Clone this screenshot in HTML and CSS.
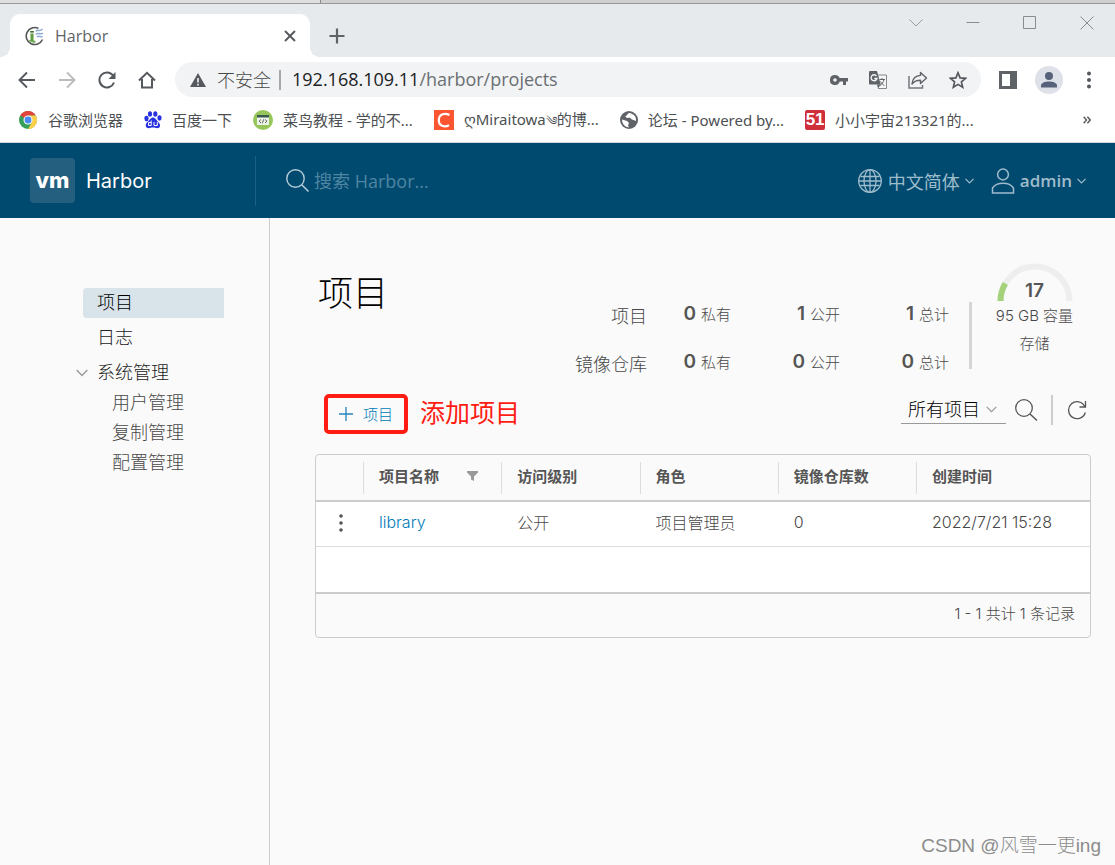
FILE: index.html
```html
<!DOCTYPE html>
<html lang="zh-CN">
<head>
<meta charset="utf-8">
<meta name="viewport" content="width=device-width, initial-scale=1">
<title>Harbor</title>
<link rel="stylesheet" href="styles.css">
</head>
<body>
<div class="window">
  <div class="desktop-edge"></div>
  <div class="tabstrip">
    <div class="tab">
      <svg class="tab-icon" width="20" height="20" viewBox="0 0 20 20"><path d="M13.500 2.400A8.500 8.500 0 1 0 17.500 13.500" fill="none" stroke="#555" stroke-width="1.600"/><path d="M5.500 7.500h3V15H5.500z" fill="#5d9c3f"/><path d="M5.200 5h3.600v1.600H5.200z" fill="#38682a"/><path d="M3.500 14q4-.5 7 1v1.500q-4 .8-7-2.500z" fill="#6ba84b"/><path d="M11 5.500c2-3 3 1 6.500-2.500M11 8.500c2-3 4 1 7-1.500M12 11c2-2 3 .5 5.500-.5" fill="none" stroke="#8dabd2" stroke-width="1.500"/></svg>
      <span class="tab-title">Harbor</span>
      <button class="icon-button tab-close" aria-label="关闭标签页"><svg width="12" height="12" viewBox="0 0 12 12"><path d="M1 1l10 10M11 1L1 11" stroke="#55585c" stroke-width="1.900"/></svg></button>
    </div>
    <button class="icon-button new-tab" aria-label="新标签页"><svg width="16" height="16" viewBox="0 0 16 16"><path d="M8 0.500v15M.5 8h15" stroke="#5f6368" stroke-width="2.200"/></svg></button>
    <div class="window-controls">
      <button class="icon-button" aria-label="搜索标签页"><svg width="14" height="14" viewBox="0 0 14 14"><path d="M.5 3.500L7 10l6.500-6.500" fill="none" stroke="#999da1"/></svg></button>
      <button class="icon-button" aria-label="最小化"><svg width="14" height="14" viewBox="0 0 14 14"><path d="M.5 6.500h13" stroke="#888b8f"/></svg></button>
      <button class="icon-button" aria-label="最大化"><svg width="14" height="14" viewBox="0 0 14 14"><path d="M.5.5h12v12H.5z" fill="none" stroke="#888b8f"/></svg></button>
      <button class="icon-button" aria-label="关闭"><svg width="14" height="14" viewBox="0 0 14 14"><path d="M.5.5l13 13M13.500.5l-13 13" stroke="#888b8f"/></svg></button>
    </div>
  </div>

  <div class="toolbar">
    <div class="nav-buttons">
      <button class="icon-button" aria-label="后退"><svg width="18" height="18" viewBox="0 0 18 18"><path d="M17 9H2M9 1.500L1.500 9 9 16.500" fill="none" stroke="#55595e" stroke-width="1.900"/></svg></button>
      <button class="icon-button" aria-label="前进"><svg width="18" height="18" viewBox="0 0 18 18"><path d="M1 9h15M9 1.500L16.500 9 9 16.500" fill="none" stroke="#babcbe" stroke-width="1.900"/></svg></button>
      <button class="icon-button" aria-label="刷新"><svg width="18" height="18" viewBox="0 0 18 18"><path d="M15 4.500A7.500 7.500 0 1 0 16 11.500" fill="none" stroke="#55595e" stroke-width="2"/><path d="M17.500 1v7h-7z" fill="#55595e"/></svg></button>
      <button class="icon-button" aria-label="主页"><svg width="18" height="18" viewBox="0 0 18 18"><path d="M1 9.500L9 1.800l8 7.700M4 8v8.500h10V8" fill="none" stroke="#55595e" stroke-width="2"/></svg></button>
    </div>
    <div class="omnibox">
      <svg width="16" height="14" viewBox="0 0 16 14"><path d="M8 0l8 14H0z" fill="#55595e"/><path d="M8 5v4.500M8 10.800v1.700" stroke="#f1f3f4" stroke-width="1.600"/></svg>
      <span class="insecure">不安全</span>
      <div class="address"><span class="host">192.168.109.11</span><input class="path" type="text" value="/harbor/projects" aria-label="地址"></div>
      <div class="omnibox-actions">
        <button class="icon-button" aria-label="密码"><svg width="18" height="18" viewBox="0 0 18 18"><path fill-rule="evenodd" d="M5 4a5 5 0 1 0 4.700 6.500H13V14h3v-3.500h2v-3.500H9.700A5 5 0 0 0 5 4zm0 3.200a1.800 1.800 0 1 1 0 3.600 1.800 1.800 0 0 1 0-3.600z" fill="#5f6368"/></svg></button>
        <button class="icon-button" aria-label="翻译"><svg width="18" height="18" viewBox="0 0 18 18"><path d="M8 4h9.500v13.500H9" fill="#f5f6f6" stroke="#85898d"/><path d="M1 0h7l3.700 13.500H1a1 1 0 0 1-1-1V1a1 1 0 0 1 1-1z" fill="#5f6368"/><path d="M7.500 5A3 3 0 1 0 8 7.500H5.300" fill="none" stroke="#f1f3f4" stroke-width="1.400"/><path d="M10.500 8.500H16M13 7v1.500M15 8.500c-.5 3-2.500 5-4 6M11.500 10.500c1 2 2.500 3.500 4 4" fill="none" stroke="#5f6368"/><path d="M8 13.500h3.700L9 17.500z" fill="#5f6368"/></svg></button>
        <button class="icon-button" aria-label="分享"><svg width="20" height="18" viewBox="0 0 20 18"><path d="M1 5v12h13.500v-3" fill="none" stroke="#74787c" stroke-width="1.500"/><path d="M12.500 1.500L18.500 7l-6 5.500V9.300C8.500 9.300 6 10.500 4 13c.5-5 3.500-8.300 8.500-8.600z" fill="none" stroke="#5f6368" stroke-width="1.400" stroke-linejoin="round"/></svg></button>
        <button class="icon-button" aria-label="加入书签"><svg width="18" height="18" viewBox="0 0 18 18"><path d="M9 1.800l2.100 5.100 5.500.4-4.200 3.600 1.300 5.400L9 13.400l-4.700 2.900 1.300-5.400-4.200-3.600 5.500-.4z" fill="none" stroke="#55595e" stroke-width="1.700"/></svg></button>
      </div>
    </div>
    <div class="browser-actions">
      <button class="icon-button" aria-label="侧边栏"><svg width="18" height="18" viewBox="0 0 18 18"><path fill-rule="evenodd" d="M0 0h18v18H0zM3 3v12h8V3z" fill="#5f6368"/></svg></button>
      <button class="icon-button" aria-label="个人资料"><svg width="28" height="28" viewBox="0 0 28 28"><circle cx="14" cy="14" r="14" fill="#dee1e8"/><circle cx="14" cy="10" r="4" fill="#56627a"/><path d="M6 21.500v-2c0-2.500 4-4 8-4s8 1.500 8 4v2z" fill="#56627a"/></svg></button>
      <button class="icon-button browser-menu" aria-label="菜单"><svg width="6" height="18" viewBox="0 0 6 18"><g fill="#55595e"><circle cx="3" cy="2.500" r="2"/><circle cx="3" cy="9" r="2"/><circle cx="3" cy="15.500" r="2"/></g></svg></button>
    </div>
  </div>

  <nav class="bookmarks" aria-label="书签">
    <a class="bookmark" href="#"><svg width="20" height="20" viewBox="0 0 20 20"><circle cx="10" cy="10" r="9" fill="#34a05a"/><path d="M10 10L2.200 5.500A9 9 0 0 1 17.800 5.500H10z" fill="#e0443b"/><path d="M17.800 5.500H10l3.900 6.700L10 19a9 9 0 0 0 7.800-13.500z" fill="#fbd14b"/><circle cx="10" cy="10" r="4.500" fill="#f3f6fb"/><circle cx="10" cy="10" r="3.400" fill="#4b8af0"/></svg><span>谷歌浏览器</span></a>
    <a class="bookmark" href="#"><svg width="18" height="20" viewBox="0 0 18 20"><g fill="#2932e1"><ellipse cx="2.500" cy="8.500" rx="2.100" ry="2.700"/><ellipse cx="6" cy="4" rx="2.100" ry="2.800"/><ellipse cx="11.300" cy="4" rx="2.100" ry="2.800"/><ellipse cx="15.500" cy="8" rx="2.100" ry="2.700"/><path d="M9 7.500c2.500 0 3 2.500 5 4.200 3.500 3 2 6.500-.5 6.500-2 0-2.500-.7-4.500-.7s-2.500.7-4.500.7c-3 0-4-4-.8-6.500C6 10 6.500 7.500 9 7.500z"/></g><path d="M7.200 10.500v5M7.200 12.500H4.500v3h2.700M10 12v3.500h3.300V12" fill="none" stroke="#fff"/></svg><span>百度一下</span></a>
    <a class="bookmark" href="#"><svg width="20" height="20" viewBox="0 0 20 20"><circle cx="10" cy="10" r="10" fill="#96c659"/><path d="M4 5h12v10H4z" fill="#eef3ea"/><path d="M4 5h12v2.500H4z" fill="#39594e"/><path d="M8 9.500L6 11.200 8 13M12 9.500l2 1.700L12 13M10.700 9.300l-1.400 4" fill="none" stroke="#5b6b63"/></svg><span>菜鸟教程 - 学的不...</span></a>
    <a class="bookmark" href="#"><svg width="20" height="20" viewBox="0 0 20 20"><path d="M0 0h20v20H0z" fill="#fc5531"/><path d="M15.500 5C11 2.500 5 4 4.800 10S10.500 17.500 15 15.200" fill="none" stroke="#fff" stroke-width="2.200"/></svg><span>ღMiraitowa<span class="ornament">༄</span>的博...</span></a>
    <a class="bookmark" href="#"><svg width="18" height="18" viewBox="0 0 18 18"><circle cx="9" cy="9" r="9" fill="#5f6368"/><path d="M2 8.500l5 1.500 2 2-1 2.500 1 2A7.500 7.500 0 0 1 2 8.500zM9 2c-2 1-1.500 2.500-3.500 3 0 2 2 2 4 1.800 1.500 0 1.500 2.200 4 2.200l2.500 1c.5-4-2-7.500-7-8z" fill="#fff"/></svg><span>论坛 - Powered by...</span></a>
    <a class="bookmark" href="#"><span class="badge-51">51</span><span>小小宇宙213321的...</span></a>
    <button class="icon-button bookmarks-more" aria-label="更多书签"><svg width="8" height="8" viewBox="0 0 8 8"><path d="M.7.7L3.500 4 .7 7.300M4.400.7L7.200 4 4.400 7.300" fill="none" stroke="#55595e" stroke-width="1.400"/></svg></button>
  </nav>

  <header class="app-header">
    <a class="brand" href="#"><span class="logo">vm</span><span>Harbor</span></a>
    <div class="search">
      <svg width="24" height="24" viewBox="0 0 24 24"><circle cx="9.500" cy="9.500" r="8.700" fill="none" stroke="#b5cbd7" stroke-width="1.400"/><path d="M16 16l6.500 6.500" stroke="#b5cbd7" stroke-width="1.600"/></svg>
      <input class="search-input" type="search" placeholder="搜索 Harbor..." aria-label="搜索 Harbor">
    </div>
    <div class="header-actions">
      <button class="header-button"><svg width="26" height="26" viewBox="0 0 26 26"><g fill="none" stroke="#9fbccb" stroke-width="1.300"><circle cx="13" cy="13" r="11.300"/><ellipse cx="13" cy="13" rx="6" ry="11.300"/><path d="M13 1.700v22.600M3.500 8.500h19M1.700 13h22.600M3.500 17.500h19"/></g></svg><span class="language">中文简体</span><svg class="caret" width="9" height="6" viewBox="0 0 9 6"><path d="M.5.8l4 4 4-4" fill="none" stroke="#9fbccb" stroke-width="1.200"/></svg></button>
      <button class="header-button"><svg width="24" height="26" viewBox="0 0 24 26"><g fill="none" stroke="#9fbccb" stroke-width="1.500"><circle cx="12" cy="6.500" r="5.400"/><path d="M1.500 25v-5c2-3 6-4.800 10.500-4.800s8.500 1.800 10.500 4.800v5z"/></g></svg><span class="user">admin</span><svg class="caret" width="9" height="6" viewBox="0 0 9 6"><path d="M.5.8l4 4 4-4" fill="none" stroke="#9fbccb" stroke-width="1.200"/></svg></button>
    </div>
  </header>

  <div class="app-body">
    <nav class="sidenav" aria-label="主导航">
      <a class="nav-item active" href="#">项目</a>
      <a class="nav-item" href="#">日志</a>
      <div class="nav-group">
        <button class="nav-item nav-toggle" aria-expanded="true"><svg width="12" height="8" viewBox="0 0 12 8"><path d="M.7 1L6 6.500 11.300 1" fill="none" stroke="#999" stroke-width="1.400"/></svg><span>系统管理</span></button>
        <a class="nav-sub" href="#">用户管理</a>
        <a class="nav-sub" href="#">复制管理</a>
        <a class="nav-sub" href="#">配置管理</a>
      </div>
    </nav>

    <main class="content">
      <div class="summary">
        <h1 class="page-title">项目</h1>
        <div class="stats">
          <span class="stat-label">项目</span>
          <span class="stat"><b>0</b>私有</span><span class="stat"><b>1</b>公开</span><span class="stat"><b>1</b>总计</span>
          <span class="stat-label">镜像仓库</span>
          <span class="stat"><b>0</b>私有</span><span class="stat"><b>0</b>公开</span><span class="stat"><b>0</b>总计</span>
        </div>
        <div class="storage">
          <div class="gauge">
            <svg width="76" height="38" viewBox="0 0 76 38"><path d="M3.500 38a34.500 34.500 0 0 1 69 0" fill="none" stroke="#eee" stroke-width="6"/><path d="M3.500 38a34.500 34.500 0 0 1 4.800-17.500" fill="none" stroke="#a3d27a" stroke-width="6"/></svg>
            <b class="gauge-value">17</b>
          </div>
          <span class="capacity">95 GB 容量</span>
          <span>存储</span>
        </div>
      </div>

      <div class="actions">
        <button class="add-button"><svg width="14" height="14" viewBox="0 0 14 14"><path d="M7 0v14M0 7h14" stroke="#2485b9" stroke-width="1.300"/></svg>项目</button>
        <span class="note">添加项目</span>
        <div class="filters">
          <div class="select-wrap">
            <select class="filter-select" aria-label="项目筛选"><option>所有项目</option></select>
            <svg class="select-caret" width="11" height="7" viewBox="0 0 11 7"><path d="M.7.8l4.800 4.900L10.300.8" fill="none" stroke="#999" stroke-width="1.200"/></svg>
          </div>
          <button class="icon-button" aria-label="搜索"><svg width="24" height="24" viewBox="0 0 24 24"><circle cx="10" cy="10" r="8.300" fill="none" stroke="#555" stroke-width="1.300"/><path d="M16 16l7 6.500" stroke="#555" stroke-width="1.500"/></svg></button>
          <span class="divider"></span>
          <button class="icon-button" aria-label="刷新列表"><svg width="20" height="20" viewBox="0 0 20 20"><path d="M17.800 6.500A8.500 8.500 0 1 0 18.300 12.500M18.500 1v6H12.500" fill="none" stroke="#555" stroke-width="1.300"/></svg></button>
        </div>
      </div>

      <div class="datagrid">
        <table class="grid">
          <thead>
            <tr>
              <th class="col-menu" aria-label="操作"></th>
              <th><div class="head-cell">项目名称<button class="icon-button" aria-label="筛选项目名称"><svg width="11" height="10" viewBox="0 0 11 10"><path d="M0 0h11v1.500L7 5.500V10L4 8.500v-3L0 1.500z" fill="#999"/></svg></button></div></th>
              <th><div class="head-cell">访问级别</div></th>
              <th><div class="head-cell">角色</div></th>
              <th><div class="head-cell">镜像仓库数</div></th>
              <th class="col-time"><div class="head-cell">创建时间</div></th>
            </tr>
          </thead>
          <tbody>
            <tr>
              <td class="menu-cell"><button class="icon-button" aria-label="library 操作"><svg width="4" height="18" viewBox="0 0 4 18"><g fill="#555"><circle cx="2" cy="2" r="1.800"/><circle cx="2" cy="9" r="1.800"/><circle cx="2" cy="16" r="1.800"/></g></svg></button></td>
              <td><a class="project-link" href="#">library</a></td>
              <td>公开</td>
              <td>项目管理员</td>
              <td>0</td>
              <td>2022/7/21 15:28</td>
            </tr>
          </tbody>
        </table>
        <div class="grid-space"></div>
        <div class="grid-footer">1 - 1 共计 1 条记录</div>
      </div>
    </main>
  </div>
  <div class="watermark">CSDN @风雪一更ing</div>
</div>
</body>
</html>
```
FILE: styles.css
```css
* { box-sizing: border-box; }

body {
  margin: 0;
  background: #fafafa;
  color: #484848;
  font-family: Inter, "Noto Sans CJK SC", sans-serif;
  font-size: 16px;
}

a { color: inherit; text-decoration: none; }
button { font: inherit; color: inherit; }
svg { display: block; flex: none; }

.window {
  position: relative;
  display: flex;
  flex-direction: column;
  min-height: 100vh;
}

.icon-button {
  display: flex;
  align-items: center;
  justify-content: center;
  flex: none;
  padding: 0;
  border: 0;
  background: none;
}

/* Browser frame */
.desktop-edge {
  height: 4px;
  border-bottom: 1px solid #96999b;
  background: linear-gradient(90deg, #dfdfdf 320px, #8a8a8a 320px, #8a8a8a 321px, #cfcfcf 321px);
}

.tabstrip {
  display: flex;
  align-items: flex-end;
  height: 53px;
  padding-left: 10px;
  background: #e6eaed;
}

.tab {
  position: relative;
  display: flex;
  align-items: center;
  width: 300px;
  height: 43px;
  padding: 0 14px 0 15px;
  border-radius: 10px 10px 0 0;
  background: #fff;
}

.tab::before,
.tab::after {
  content: "";
  position: absolute;
  bottom: 0;
  width: 10px;
  height: 10px;
}

.tab::before { right: 100%; background: radial-gradient(circle at 0 0, #e6eaed 10px, #fff 10px); }
.tab::after { left: 100%; background: radial-gradient(circle at 100% 0, #e6eaed 10px, #fff 10px); }

.tab-title {
  margin-left: 10px;
  color: #5f6368;
  font-family: "Open Sans", sans-serif;
  font-size: 16px;
}

.tab-close { margin-left: auto; }
.new-tab { width: 54px; height: 43px; }

.window-controls {
  display: flex;
  align-self: flex-start;
  gap: 43px;
  margin: 12px 21px 0 auto;
}

.toolbar {
  display: flex;
  align-items: center;
  height: 45px;
  padding: 0 18px;
  background: #fff;
}

.nav-buttons { display: flex; gap: 22px; margin-right: 19px; }

.omnibox {
  display: flex;
  flex: 1;
  align-items: center;
  height: 35px;
  padding: 0 14px 0 15px;
  border-radius: 18px;
  background: #f1f3f4;
  font-family: "Open Sans", "Noto Sans CJK SC", sans-serif;
  font-size: 18px;
}

.insecure {
  margin-left: 11px;
  padding-right: 8px;
  border-right: 2px solid #a5a8ab;
  line-height: 20px;
  font-weight: 300;
}

.address { display: flex; flex: 1; margin-left: 11px; padding-bottom: 2px; }
.host { color: #202124; }

.path {
  flex: 1;
  min-width: 0;
  padding: 0;
  border: 0;
  outline: 0;
  background: none;
  color: #6b6f73;
  font: inherit;
}

.omnibox-actions { display: flex; gap: 21px; }

.browser-actions {
  display: flex;
  align-items: center;
  gap: 18px;
  margin-left: 18px;
}

.browser-menu { width: 16px; }

.bookmarks {
  display: flex;
  align-items: center;
  gap: 21px;
  height: 41px;
  padding: 0 24px 4px 18px;
  border-bottom: 1px solid #d5d8da;
  background: #fff;
  color: #4c5053;
  font-family: "Noto Sans", "Noto Sans CJK SC", sans-serif;
  font-size: 15px;
  line-height: 20px;
  white-space: nowrap;
}

.bookmark { display: flex; align-items: center; gap: 10px; }
.bookmarks-more { margin-left: auto; }
.ornament { font-size: 12px; }

.badge-51 {
  width: 20px;
  border-radius: 2px;
  background: #cf2e3b;
  color: #fff;
  font-family: "Liberation Sans", sans-serif;
  font-size: 17px;
  font-weight: 700;
  text-align: center;
}

/* Application header */
.app-header {
  display: flex;
  align-items: center;
  height: 75px;
  background: #004a70;
}

.brand {
  display: flex;
  align-items: center;
  gap: 11px;
  width: 256px;
  height: 50px;
  padding-left: 30px;
  border-right: 1px solid #1e6084;
  color: #fff;
  font-size: 20px;
}

.logo {
  width: 45px;
  border-radius: 4px;
  background: #255f80;
  font-size: 22px;
  font-weight: 800;
  line-height: 45px;
  text-align: center;
}

.search { display: flex; flex: 1; align-items: center; gap: 4px; padding-left: 30px; }

.search-input {
  flex: 1;
  min-width: 0;
  padding: 0;
  border: 0;
  outline: 0;
  background: none;
  color: #fff;
  font-family: "Open Sans", "Noto Sans CJK SC", sans-serif;
  font-size: 18px;
}

.search-input::placeholder { color: #4f85a1; }

.header-actions { display: flex; gap: 17px; padding-right: 29px; }

.header-button {
  display: flex;
  align-items: center;
  gap: 5px;
  padding: 0;
  border: 0;
  background: none;
  color: #9fbccb;
  font-size: 18px;
}

.user { font-family: "Open Sans", sans-serif; font-size: 17px; font-weight: 600; }

/* Side navigation */
.app-body { display: flex; flex: 1; }

.sidenav {
  display: flex;
  flex-direction: column;
  gap: 5px;
  width: 270px;
  padding: 70px 45px 0 83px;
  border-right: 1px solid #ccc;
  color: #222;
  font-size: 18px;
  font-weight: 300;
  line-height: 30px;
}

.nav-item { padding-left: 14px; }

.active {
  border-radius: 4px 0 0 4px;
  background: #d9e4ea;
  color: #000;
}

.nav-group { display: flex; flex-direction: column; margin-left: -7px; }

.nav-toggle {
  display: flex;
  align-items: center;
  gap: 9px;
  padding: 0;
  border: 0;
  background: none;
}

.nav-sub { padding-left: 36px; color: #484848; }

/* Projects page */
.content { flex: 1; min-width: 0; padding: 45px 24px 0 45px; }
.summary { display: flex; height: 122px; }

.page-title {
  margin: 9px auto 0 3px;
  color: #000;
  font-size: 35px;
  font-weight: 300;
  line-height: 42px;
}

.stats {
  display: grid;
  grid-template-columns: auto 84px 109px 109px;
  grid-auto-rows: 48px;
  align-items: center;
  margin-top: 26px;
  text-align: right;
  font-size: 15px;
  font-weight: 300;
}

.stat-label { padding-top: 3px; font-size: 18px; }
.stat b { margin-right: 5px; color: #555; font-size: 19px; font-weight: 600; }

.storage {
  display: flex;
  flex-direction: column;
  align-items: center;
  width: 142px;
  padding-left: 29px;
  font-size: 15px;
  font-weight: 300;
  line-height: 28px;
  background: linear-gradient(#d5d5d5, #d5d5d5) 20px 39px / 3px 67px no-repeat;
}

.gauge { position: relative; margin-bottom: 1px; }

.gauge-value {
  position: absolute;
  inset: 14px 0 auto;
  color: #555;
  font-size: 19px;
  font-weight: 600;
  text-align: center;
}

.actions { display: flex; align-items: center; height: 57px; padding-left: 9px; }

.add-button {
  display: flex;
  align-items: center;
  justify-content: center;
  gap: 10px;
  width: 84px;
  height: 40px;
  padding: 0;
  border: 4px solid #ff1c12;
  border-radius: 5px;
  background: none;
  color: #0079b8;
  font-size: 15px;
  font-weight: 300;
}

.note { margin: 0 0 6px 12px; color: #ff1c12; font-size: 25px; }
.filters { display: flex; align-items: center; margin: 0 4px 8px auto; }
.select-wrap { position: relative; margin-right: 8px; }

.filter-select {
  appearance: none;
  width: 105px;
  height: 28px;
  padding: 0 0 0 7px;
  border: 0;
  border-bottom: 1px solid #999;
  background: none;
  color: #000;
  font: inherit;
  font-size: 18px;
  font-weight: 300;
}

.select-caret { position: absolute; right: 9px; top: 10px; pointer-events: none; }
.divider { width: 2px; height: 30px; margin: 0 14px 0 13px; background: #ccc; }

.datagrid {
  margin-top: 12px;
  border: 1px solid #ccc;
  border-radius: 4px;
  overflow: hidden;
}

.grid { width: 100%; border-collapse: collapse; table-layout: fixed; }
.grid th { height: 46px; padding: 0; border-bottom: 2px solid #ccc; text-align: left; }
.col-menu { width: 47px; }
.col-time { width: 174px; }

.head-cell {
  display: flex;
  align-items: center;
  justify-content: space-between;
  height: 32px;
  padding: 0 23px 4px 15px;
  border-left: 1px solid #ddd;
  color: #555;
  font-size: 15px;
  font-weight: 700;
}

.grid td {
  height: 45px;
  padding: 0 0 4px 16px;
  border-bottom: 1px solid #ddd;
  background: #fff;
  font-weight: 300;
}

.grid .menu-cell { padding: 0 0 2px 23px; }
.grid .project-link { color: #0079b8; }

.grid-space { height: 47px; border-bottom: 2px solid #ccc; background: #fff; }

.grid-footer {
  height: 43px;
  padding-right: 15px;
  font-size: 15px;
  font-weight: 300;
  line-height: 40px;
  text-align: right;
}

.watermark {
  position: absolute;
  right: 14px;
  bottom: 8px;
  color: #8c8c8c;
  font-family: "Liberation Sans", "Noto Sans CJK SC", sans-serif;
  font-size: 19px;
  font-weight: 300;
}
```
